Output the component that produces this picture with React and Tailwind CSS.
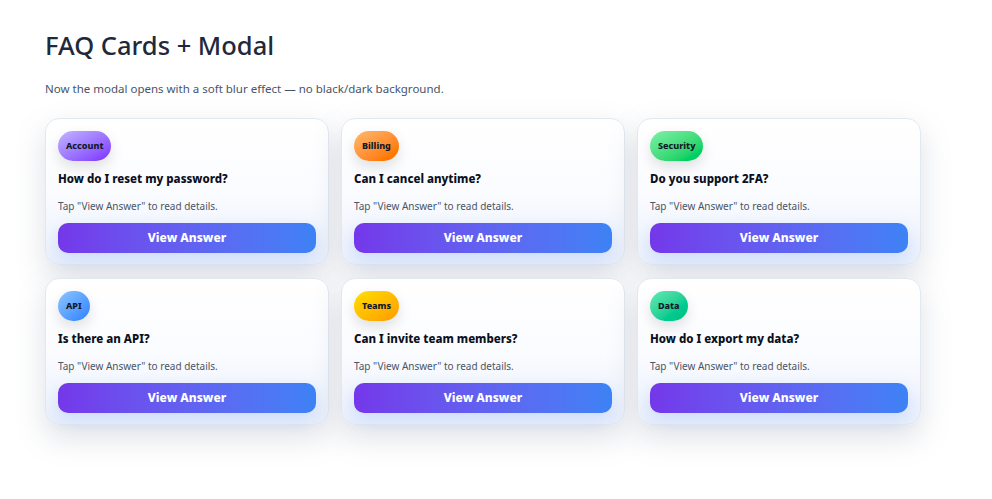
import React from 'react';

const faqs = [
  { tag: 'Account', q: 'How do I reset my password?', badge: 'from-violet-300 to-violet-600' },
  { tag: 'Billing', q: 'Can I cancel anytime?', badge: 'from-orange-300 to-orange-500' },
  { tag: 'Security', q: 'Do you support 2FA?', badge: 'from-green-300 to-green-500' },
  { tag: 'API', q: 'Is there an API?', badge: 'from-blue-300 to-blue-500' },
  { tag: 'Teams', q: 'Can I invite team members?', badge: 'from-yellow-300 to-amber-500' },
  { tag: 'Data', q: 'How do I export my data?', badge: 'from-emerald-300 to-emerald-500' },
];

const FaqCard = ({ item }) => (
  <div className="rounded-[14px] border border-[#e2e8f0] bg-gradient-to-b from-white via-[#fbfcff] to-[#e9effb] px-3 pt-3 pb-[11px] shadow-[0_12px_30px_rgba(100,116,139,0.22)]">
    <span
      className={`inline-flex h-[30px] items-center rounded-full bg-gradient-to-br px-[8px] text-[9px] font-extrabold text-[#111827] shadow-[0_6px_14px_rgba(0,0,0,0.12)] ${item.badge}`}
    >
      {item.tag}
    </span>
    <h3 className="mt-[9px] text-[11.5px] font-extrabold leading-[18px] text-[#0b1020]">{item.q}</h3>
    <p className="mt-[12px] text-[10px] leading-[12px] text-[#4b5563]">Tap "View Answer" to read details.</p>
    <button className="mt-[11px] h-[30px] w-full rounded-[10px] bg-gradient-to-r from-[#7437ea] to-[#3d82f6] text-[12px] font-extrabold text-white shadow-[0_6px_16px_rgba(59,130,246,0.18)]">
      View Answer
    </button>
  </div>
);

export default function App() {
  return (
    <div className="min-h-[499px] bg-white px-[45px] pt-[28px]" style={{ fontFamily: '"Noto Sans", "Open Sans", sans-serif' }}>
      <h1 className="text-[25.5px] font-medium leading-[34px] text-[#1e293b]">FAQ Cards + Modal</h1>
      <p className="mt-[19px] text-[11.5px] leading-[16px] text-[#475569]">
        Now the modal opens with a soft blur effect — no black/dark background.
      </p>
      <div className="mt-[21px] grid w-[876px] grid-cols-3 gap-x-3 gap-y-[13px]">
        {faqs.map((item) => (
          <FaqCard key={item.tag} item={item} />
        ))}
      </div>
    </div>
  );
}
